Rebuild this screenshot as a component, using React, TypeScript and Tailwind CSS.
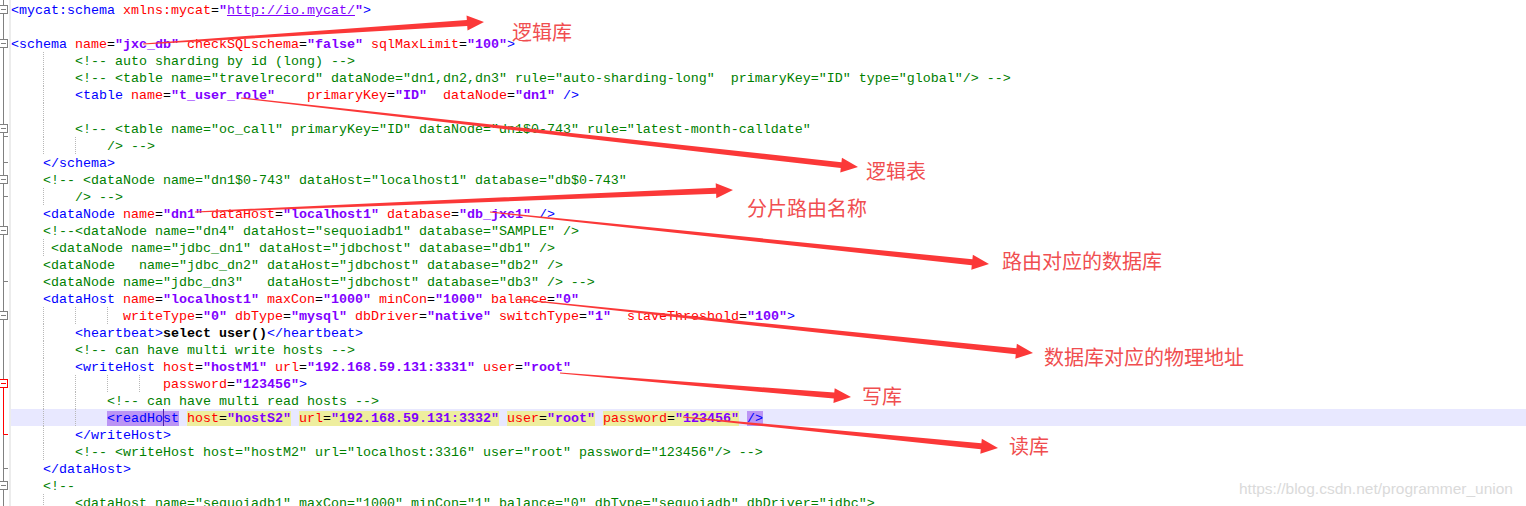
import React from "react";

type Kind = "tag" | "attr" | "eq" | "val" | "com" | "txt" | "ws";
type Tok = { k: Kind; s: string };

const CODE = [
  '<mycat:schema xmlns:mycat="http://io.mycat/">',
  "",
  '<schema name="jxc_db" checkSQLschema="false" sqlMaxLimit="100">',
  "        <!-- auto sharding by id (long) -->",
  '        <!-- <table name="travelrecord" dataNode="dn1,dn2,dn3" rule="auto-sharding-long"  primaryKey="ID" type="global"/> -->',
  '        <table name="t_user_role"    primaryKey="ID"  dataNode="dn1" />',
  "",
  '        <!-- <table name="oc_call" primaryKey="ID" dataNode="dn1$0-743" rule="latest-month-calldate"',
  "            /> -->",
  "    </schema>",
  '    <!-- <dataNode name="dn1$0-743" dataHost="localhost1" database="db$0-743"',
  "        /> -->",
  '    <dataNode name="dn1" dataHost="localhost1" database="db_jxc1" />',
  '    <!--<dataNode name="dn4" dataHost="sequoiadb1" database="SAMPLE" />',
  '     <dataNode name="jdbc_dn1" dataHost="jdbchost" database="db1" />',
  '    <dataNode   name="jdbc_dn2" dataHost="jdbchost" database="db2" />',
  '    <dataNode name="jdbc_dn3"   dataHost="jdbchost" database="db3" /> -->',
  '    <dataHost name="localhost1" maxCon="1000" minCon="1000" balance="0"',
  '              writeType="0" dbType="mysql" dbDriver="native" switchType="1"  slaveThreshold="100">',
  "        <heartbeat>select user()</heartbeat>",
  "        <!-- can have multi write hosts -->",
  '        <writeHost host="hostM1" url="192.168.59.131:3331" user="root"',
  '                   password="123456">',
  "            <!-- can have multi read hosts -->",
  '            <readHost host="hostS2" url="192.168.59.131:3332" user="root" password="123456" />',
  "        </writeHost>",
  '        <!-- <writeHost host="hostM2" url="localhost:3316" user="root" password="123456"/> -->',
  "    </dataHost>",
  "    <!--",
  '        <dataHost name="sequoiadb1" maxCon="1000" minCon="1" balance="0" dbType="sequoiadb" dbDriver="jdbc">',
];

// indent guide columns per line
const GUIDES: number[][] = [
  [], [], [], [4], [4], [4], [4], [4], [4, 8], [], [], [4], [], [], [4], [], [], [],
  [4, 8, 12], [4], [4], [4], [4, 8, 12, 16], [4, 8], [4, 8], [4], [4], [], [], [4],
];

const CURRENT = 24;

function tokenize(lines: string[]): Tok[][] {
  let inComment = false;
  let inTag = false;
  return lines.map((line) => {
    const out: Tok[] = [];
    let i = 0;
    while (i < line.length) {
      const rest = line.slice(i);
      if (inComment) {
        const end = rest.indexOf("-->");
        const s = end < 0 ? rest : rest.slice(0, end + 3);
        if (end >= 0) inComment = false;
        out.push({ k: "com", s });
        i += s.length;
        continue;
      }
      if (rest.startsWith("<!--")) {
        inComment = true;
        continue;
      }
      const ws = rest.match(/^\s+/);
      if (ws) {
        out.push({ k: "ws", s: ws[0] });
        i += ws[0].length;
        continue;
      }
      if (inTag) {
        if (rest.startsWith("/>")) {
          out.push({ k: "tag", s: "/>" });
          i += 2;
          inTag = false;
        } else if (rest[0] === ">") {
          out.push({ k: "tag", s: ">" });
          i += 1;
          inTag = false;
        } else if (rest[0] === "=") {
          out.push({ k: "eq", s: "=" });
          i += 1;
        } else if (rest[0] === '"') {
          const s = rest.slice(0, rest.indexOf('"', 1) + 1);
          out.push({ k: "val", s });
          i += s.length;
        } else {
          const s = (rest.match(/^[^\s=>\/"]+/) || [rest[0]])[0];
          out.push({ k: "attr", s });
          i += s.length;
        }
        continue;
      }
      if (rest[0] === "<") {
        const s = (rest.match(/^<\/?[\w:]+/) || ["<"])[0];
        out.push({ k: "tag", s });
        i += s.length;
        inTag = true;
        continue;
      }
      const s = (rest.match(/^[^<\s]+/) || [rest[0]])[0];
      out.push({ k: "txt", s });
      i += s.length;
    }
    return out;
  });
}

const color: Record<Kind, string> = {
  tag: "text-[#0000ff]",
  attr: "text-[#ff0000]",
  eq: "text-black",
  val: "text-[#8000ff] font-bold",
  com: "text-[#008000]",
  txt: "text-black font-bold",
  ws: "",
};

function Token({ t, match }: { t: Tok; match: boolean }) {
  let bg = "";
  if (match) {
    if (t.k === "tag") bg = "bg-[#bb95f4]";
    else if (t.k === "attr" || t.k === "eq" || t.k === "val") bg = "bg-[#eeee9e]";
  }
  if (t.k === "val" && t.s.includes("http")) {
    return (
      <span className={`${color.val} ${bg}`}>
        "<span className="underline font-normal">{t.s.slice(1, -1)}</span>"
      </span>
    );
  }
  return <span className={`${color[t.k]} ${bg}`}>{t.s}</span>;
}

function Gutter() {
  const grey = "#808080";
  const red = "#ff0000";
  const c = (i: number) => 1 + i * 17 + 8.5;
  const boxes = [0, 2, 7, 10, 13, 18, 28];
  const ticks = [136.5, c(9), c(11), c(16), c(27)];
  return (
    <svg width="11" height="506" className="shrink-0 block">
      <rect x="9" y="0" width="2" height="506" fill="#ececec" />
      <line x1="3.5" y1="0" x2="3.5" y2="506" stroke={grey} />
      <line x1="3.5" y1={c(22)} x2="3.5" y2={c(25)} stroke={red} />
      {ticks.map((y) => (
        <line key={y} x1="3.5" y1={Math.floor(y) + 0.5} x2="8" y2={Math.floor(y) + 0.5} stroke={grey} />
      ))}
      <line x1="3.5" y1={Math.floor(c(25)) + 0.5} x2="8" y2={Math.floor(c(25)) + 0.5} stroke={red} />
      {boxes.map((i) => (
        <g key={i}>
          <rect x="-0.5" y={Math.floor(c(i)) - 3.5} width="8" height="8" fill="white" stroke={grey} />
          <line x1="1" y1={Math.floor(c(i)) + 0.5} x2="6" y2={Math.floor(c(i)) + 0.5} stroke={grey} />
        </g>
      ))}
      <rect x="-0.5" y={Math.floor(c(22)) - 3.5} width="8" height="8" fill="white" stroke={red} />
      <line x1="1" y1={Math.floor(c(22)) + 0.5} x2="6" y2={Math.floor(c(22)) + 0.5} stroke={red} />
    </svg>
  );
}

const ARROWS: [number, number, number, number][] = [
  [143, 44, 484, 22],
  [241, 98, 858, 167],
  [195, 212, 733, 190],
  [490, 212, 989, 264],
  [515, 299, 1033, 353],
  [560, 373, 851, 397],
  [683, 417, 998, 448],
];

function arrowPoints([x0, y0, x1, y1]: [number, number, number, number]) {
  const len = Math.hypot(x1 - x0, y1 - y0);
  const ux = (x1 - x0) / len;
  const uy = (y1 - y0) / len;
  const nx = -uy;
  const ny = ux;
  const L = 17;
  const bx = x1 - ux * L;
  const by = y1 - uy * L;
  const p = (x: number, y: number, w: number) => `${x + nx * w},${y + ny * w}`;
  return [p(x0, y0, 0.6), p(bx, by, 3), p(bx, by, 7.5), `${x1},${y1}`, p(bx, by, -7.5), p(bx, by, -3), p(x0, y0, -0.6)].join(" ");
}

const LABELS: { text: string; x: number; y: number }[] = [
  { text: "逻辑库", x: 512, y: 33 },
  { text: "逻辑表", x: 866, y: 172 },
  { text: "分片路由名称", x: 747, y: 209 },
  { text: "路由对应的数据库", x: 1002, y: 262 },
  { text: "数据库对应的物理地址", x: 1044, y: 358 },
  { text: "写库", x: 862, y: 397 },
  { text: "读库", x: 1009, y: 447 },
];

export default function App() {
  const lines = tokenize(CODE);
  return (
    <div className="relative w-[1526px] h-[506px] overflow-hidden bg-white">
      <div className="flex">
        <Gutter />
        <div className="flex-1 flex flex-col pt-[1px] font-['Liberation_Mono','Courier_New',monospace] text-[13.333px] leading-[17px]">
          {lines.map((toks, i) => (
            <div key={i} className={`relative h-[17px] pt-[1px] whitespace-pre ${i === CURRENT ? "bg-[#e8e8ff]" : ""}`}>
              {GUIDES[i].map((col) => (
                <span
                  key={col}
                  className="absolute top-0 bottom-0 border-l border-dotted border-[#b8b8b8]"
                  style={{ left: col * 8 }}
                />
              ))}
              {toks.map((t, j) => (
                <Token key={j} t={t} match={i === CURRENT} />
              ))}
              {i === CURRENT && <span className="absolute top-0 left-[152px] w-[1px] h-[17px] bg-[#4a1fb0]" />}
            </div>
          ))}
        </div>
      </div>

      <svg width="1526" height="506" className="absolute inset-0 pointer-events-none">
        {ARROWS.map((a, i) => (
          <polygon key={i} points={arrowPoints(a)} fill="#fb3838" />
        ))}
      </svg>

      {LABELS.map((l) => (
        <div
          key={l.text}
          className="absolute whitespace-nowrap text-[20px] leading-[20px] text-[#f04e50] font-['Noto_Sans_CJK_SC',sans-serif]"
          style={{ left: l.x, top: l.y - 11 }}
        >
          {l.text}
        </div>
      ))}

      <div className="absolute right-[13px] top-[481px] text-[15.5px] leading-[15.5px] text-[#dadada] font-['Liberation_Sans',Arial,sans-serif]">
        https://blog.csdn.net/programmer_union
      </div>
    </div>
  );
}
